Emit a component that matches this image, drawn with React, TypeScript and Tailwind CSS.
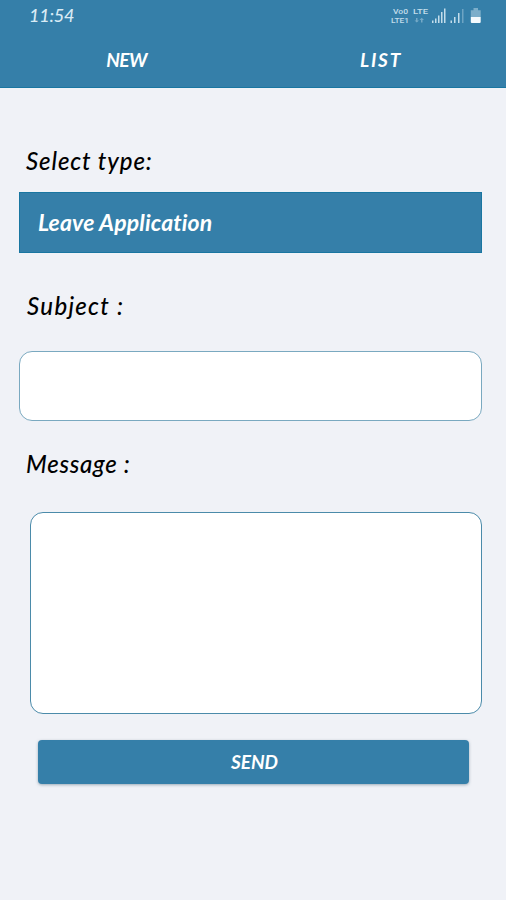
import { useState } from "react";

function StatusIcons() {
  return (
    <svg className="h-8 w-[126px] not-italic" viewBox="0 0 126 32" fill="#c3ddeb">
      <g fontFamily="Roboto, sans-serif" fontWeight="500" fontSize="8">
        <text x="13" y="14" textLength="15" lengthAdjust="spacingAndGlyphs">Vo0</text>
        <text x="11" y="23" textLength="18" lengthAdjust="spacingAndGlyphs">LTE1</text>
        <text x="33" y="14" textLength="15" lengthAdjust="spacingAndGlyphs">LTE</text>
      </g>
      <path d="M36 18h1.500v2.500H39L36.800 22.500 34.500 20.500H36zM42.500 22.500H41V20h-1.500l2.200-2.200L44 20h-1.500z" opacity="0.45" />
      <path d="M52 20.500h1.500V23H52zM55 18.500h1.500V23H55zM58 15.500h1.500V23H58zM61 12h1.500v11H61zM64 8.500h1.500V23H64z" />
      <path d="M70.500 20.500H72V23h-1.500zM74 17h1.500v6H74zM78 13h1.500v10H78z" />
      <path d="M82 9h1.500v14H82z" opacity="0.4" />
      <path d="M93.500 8h4.500v2.200h2.700V17H90.800v-6.800h2.700z" opacity="0.5" />
      <path d="M90.800 17h9.900v5a1 1 0 0 1-1 1h-7.900a1 1 0 0 1-1-1z" fill="#f4fafd" />
    </svg>
  );
}

export default function App() {
  const [subject, setSubject] = useState("");
  const [message, setMessage] = useState("");

  return (
    <div className="flex h-[900px] w-[506px] flex-col bg-[#f0f2f7] font-[Lato,sans-serif] text-black italic">
      <header className="flex h-[88px] flex-col border-b border-[#1976a1] bg-[#357fa9] text-white">
        <div className="flex h-8 justify-between">
          <span className="pl-[29px] text-[18px] leading-[31px] font-medium tracking-[-0.2px] text-[#d9ebf5]">11:54</span>
          <StatusIcons />
        </div>
        <nav className="grid grid-cols-2 text-center text-[19px] leading-[55px] font-bold">
          <button className="tracking-[-0.5px]">NEW</button>
          <button className="pl-[3px] tracking-[1.8px]">LIST</button>
        </nav>
      </header>

      <main className="flex flex-col pr-6 pl-[19px]">
        <label className="mt-[57px] pl-[7px] text-[24px] leading-8 font-medium tracking-[0.9px]">
          Select type:
        </label>
        <button className="mt-[15px] h-[61px] border border-[#1976a1] bg-[#357fa9] pl-[18px] text-left text-[23px] font-bold tracking-[0.15px] text-white italic">
          Leave Application
        </button>

        <label className="mt-[37px] pl-2 text-[24px] leading-8 font-medium tracking-[1.3px]">
          Subject :
        </label>
        <input
          className="mt-[29px] h-[70px] rounded-[13px] border border-[#7aa9c0] bg-white px-4 outline-none"
          value={subject}
          onChange={(e) => setSubject(e.target.value)}
        />

        <label className="mt-[27px] pl-[7px] text-[24px] leading-8 font-medium tracking-[0.7px]">
          Message :
        </label>
        <textarea
          className="mt-8 ml-[11px] h-[202px] resize-none rounded-[13px] border border-[#4b8baa] bg-white p-4 outline-none"
          value={message}
          onChange={(e) => setMessage(e.target.value)}
        />

        <button className="mt-[26px] mr-[13px] ml-[19px] h-[44px] rounded-[4px] bg-[#357fa9] pl-[2px] text-[19px] font-bold text-white shadow-[0_1px_3px_#48687c80]">
          SEND
        </button>
      </main>
    </div>
  );
}
